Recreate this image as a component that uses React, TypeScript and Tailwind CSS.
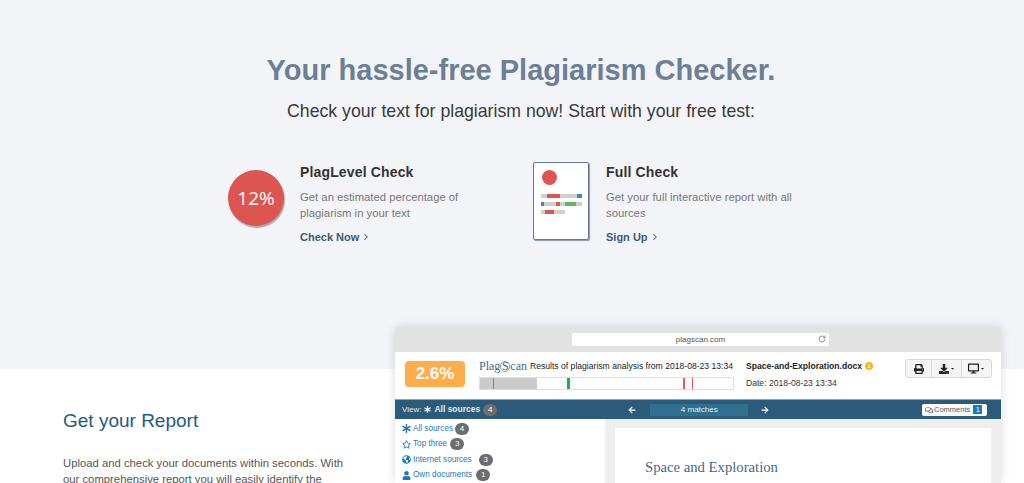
import React from 'react';
import { ChevronRight, RotateCw } from 'lucide-react';
import { FaPrint, FaDownload, FaDesktop, FaAsterisk, FaRegStar, FaGlobeAmericas, FaUser, FaArrowLeft, FaArrowRight, FaRegComments, FaCaretDown } from 'react-icons/fa';

const sources = [
  { label: 'All sources', count: 4, icon: <FaAsterisk className="w-[9px] h-[9px]" />, gap: 'ml-[2px]' },
  { label: 'Top three', count: 3, icon: <FaRegStar className="w-[9px] h-[9px]" />, gap: 'ml-[3px]' },
  { label: 'Internet sources', count: 3, icon: <FaGlobeAmericas className="w-[9px] h-[9px]" />, gap: 'ml-[7px]' },
  { label: 'Own documents', count: 1, icon: <FaUser className="w-[9px] h-[9px]" />, gap: 'ml-[4px]' },
];

const Count: React.FC<{ n: number; className?: string }> = ({ n, className = '' }) => (
  <span className={`flex items-center justify-center w-[14px] h-[12px] rounded-full bg-[#6d6d6d] text-white text-[8px] leading-none shrink-0 ${className}`}>{n}</span>
);

const DocIcon = () => (
  <div className="flex flex-col w-[56px] h-[78px] bg-white border border-[#67788a] rounded-[2px] shadow-[1px_1px_1px_#8a97a5] px-[7px] pt-[7px] shrink-0">
    <div className="w-[15px] h-[15px] rounded-full bg-[#dd5550] ml-[1px]" />
    <div className="flex h-[4px] w-[41px] mt-[9px] bg-[#cfcfcf]">
      <span className="w-[13px] h-full ml-[6px] bg-[#dd5550]" />
      <span className="w-[5px] h-full ml-auto bg-[#3b86c6]" />
    </div>
    <div className="flex h-[4px] w-[41px] mt-[4px] bg-[#cfcfcf]">
      <span className="w-[3px] h-full bg-[#3b86c6]" />
      <span className="w-[4px] h-full ml-[12px] bg-[#dd5550]" />
      <span className="w-[11px] h-full ml-[5px] bg-[#5cb85c]" />
    </div>
    <div className="flex h-[4px] w-[24px] mt-[4px] bg-[#cfcfcf]">
      <span className="w-[9px] h-full ml-[4px] bg-[#dd5550]" />
    </div>
  </div>
);

const Feature: React.FC<{ title: string; lines: string[]; link: string; className?: string }> = ({ title, lines, link, className = '' }) => (
  <div className={`flex flex-col ${className}`}>
    <h3 className="text-[14px] leading-[20px] font-bold text-[#333] tracking-[0.15px]">{title}</h3>
    <p className="mt-[7px] text-[11.3px] leading-[16px] text-[#777]">{lines[0]}<br />{lines[1]}</p>
    <a className="flex items-center mt-[8px] text-[11px] leading-[16px] font-bold text-[#3c5a78]">
      {link}<ChevronRight className="w-[10px] h-[10px] ml-[2px]" strokeWidth={2.5} />
    </a>
  </div>
);

const Report = () => (
  <div className="flex flex-col w-[606px] h-[156px] shadow-[0_0_10px_rgba(0,0,0,0.14)] bg-white">
    {/* fake browser bar */}
    <div className="flex items-center justify-center h-[25px] bg-[#e2e2e2] shrink-0">
      <div className="relative flex items-center justify-center w-[257px] h-[13px] ml-[5px] bg-white rounded-[2px] text-[8px] text-[#555]">
        plagscan.com
        <RotateCw className="absolute right-[3px] top-[2px] w-[8px] h-[8px] text-[#666]" />
      </div>
    </div>

    {/* report head */}
    <div className="flex h-[47px] shrink-0 bg-white">
      <div className="flex items-center justify-center w-[60px] h-[26px] mt-[9px] ml-[10px] rounded-[4px] bg-[#ffad4a] text-white text-[17px] font-bold">2.6%</div>
      <div className="flex flex-col ml-[14px] w-[255px] shrink-0">
        <div className="flex items-center h-[14px] mt-[7px]">
          <span className="text-[12px] leading-none text-[#3d6a8c] w-[46px] whitespace-nowrap" style={{ fontFamily: '"Liberation Serif", serif' }}>
            Plag<span className="inline-block rounded-full border border-[#7d9ab0] leading-[9px] w-[10px] text-center">S</span>can
          </span>
          <span className="ml-[5px] text-[8.6px] text-[#222] whitespace-nowrap">Results of plagiarism analysis from 2018-08-23 13:34</span>
        </div>
        <div className="flex h-[13px] mt-[4px] border border-[#dedede] bg-white">
          <div className="relative w-[57px] h-full bg-[#cbcbcb]"><span className="absolute left-[13px] w-px h-full bg-[#ee5555]" /></div>
          <span className="ml-[30px] w-[3px] h-full bg-[#12b84a]" />
          <span className="ml-[113px] w-[2px] h-full bg-[#ee5555]" />
          <span className="ml-[7px] w-px h-full bg-[#ee5555]" />
        </div>
      </div>
      <div className="flex flex-col ml-[12px] w-[159px] shrink-0">
        <div className="flex items-center h-[14px] mt-[7px] text-[8.6px] font-bold text-[#222]">
          Space-and-Exploration.docx
          <span className="flex items-center justify-center ml-[3px] w-[8px] h-[8px] rounded-full bg-[#f5b818] text-white text-[6px]">1</span>
        </div>
        <div className="mt-[4px] text-[8.6px] text-[#333]">Date: 2018-08-23 13:34</div>
      </div>
      <div className="flex h-[19px] mt-[7px] rounded-[3px] border border-[#d8d8d8] bg-[#f4f4f4] text-[#222]">
        <div className="flex items-center justify-center w-[26px] border-r border-[#d8d8d8]"><FaPrint className="w-[10px] h-[10px]" /></div>
        <div className="flex items-center justify-center w-[30px] border-r border-[#d8d8d8]"><FaDownload className="w-[10px] h-[10px]" /><FaCaretDown className="w-[5px] h-[5px] ml-[1px]" /></div>
        <div className="flex items-center justify-center w-[29px]"><FaDesktop className="w-[11px] h-[11px]" /><FaCaretDown className="w-[5px] h-[5px] ml-[1px]" /></div>
      </div>
    </div>

    {/* nav bar */}
    <div className="flex items-center h-[20px] shrink-0 bg-[#2b5b7b] border-t border-[#8aa3b5] text-[#e4ecf1] text-[8px]">
      <span className="ml-[7px]">View:</span>
      <FaAsterisk className="w-[7px] h-[7px] ml-[3px] text-white" />
      <span className="ml-[3px] font-bold text-[8.5px]">All sources</span>
      <Count n={4} className="ml-[3px]" />
      <FaArrowLeft className="w-[8px] h-[8px] ml-[131px] text-white" />
      <div className="flex items-center justify-center w-[98px] h-[12px] ml-[14px] bg-[#31708f] text-[8px]">4 matches</div>
      <FaArrowRight className="w-[8px] h-[8px] ml-[13px] text-white" />
      <div className="flex items-center h-[12px] w-[65px] ml-auto mr-[14px] pl-[3px] rounded-[2px] bg-white text-[#555] text-[7.5px]">
        <FaRegComments className="w-[8px] h-[8px] mr-[1px]" />Comments
        <span className="flex items-center justify-center w-[9px] h-[9px] ml-[3px] bg-[#0d7ec4] text-white">1</span>
      </div>
    </div>

    {/* body */}
    <div className="flex flex-1 min-h-0">
      <ul className="flex flex-col w-[210px] shrink-0 bg-white pt-[2px] pl-[7px] text-[8.2px] text-[#1f78b4]">
        {sources.map(s => (
          <li key={s.label} className="flex items-center h-[16px]">
            {s.icon}<span className="ml-[2px]">{s.label}</span><Count n={s.count} className={s.gap} />
          </li>
        ))}
      </ul>
      <div className="flex-1 bg-[#eeeeee] pl-[10px] pr-[10px] pt-[9px]">
        <div className="h-full bg-white pl-[30px] pt-[31px] text-[14.7px] leading-[16px] text-[#3d6a8c]" style={{ fontFamily: '"Liberation Serif", serif' }}>Space and Exploration</div>
      </div>
    </div>
  </div>
);

export default function App() {
  return (
    <div className="flex flex-col w-[1024px] h-[483px] overflow-hidden bg-white" style={{ fontFamily: '"Liberation Sans", Arial, sans-serif' }}>
      <section className="flex flex-col items-center h-[369px] shrink-0 bg-[#f3f4f7] pl-[18px] pt-[52px]">
        <h1 className="text-[29px] leading-[36px] font-bold text-[#6b7f97]">Your hassle-free Plagiarism Checker.</h1>
        <p className="mt-[11px] text-[17.7px] leading-[24px] text-[#3a3a3a]">Check your text for plagiarism now! Start with your free test:</p>
        <div className="flex self-start ml-[210px] mt-[39px]">
          <div className="flex items-start w-[305px]">
            <div className="flex items-center justify-center w-[56px] h-[56px] mt-[8px] rounded-full bg-[#dd5550] shadow-[1px_2px_1px_#a9a9a9] text-white text-[19px] font-medium shrink-0" style={{ fontFamily: '"Open Sans", sans-serif' }}>12%</div>
            <Feature className="ml-[16px]" title="PlagLevel Check" lines={['Get an estimated percentage of', 'plagiarism in your text']} link="Check Now" />
          </div>
          <div className="flex items-start">
            <DocIcon />
            <Feature className="ml-[17px]" title="Full Check" lines={['Get your full interactive report with all', 'sources']} link="Sign Up" />
          </div>
        </div>
      </section>

      <section className="flex flex-1 min-h-0">
        <div className="w-[395px] shrink-0 pl-[63px] pt-[40px]">
          <h2 className="text-[19px] leading-[24px] text-[#1f5a85]">Get your Report</h2>
          <p className="mt-[22px] w-[290px] text-[11.3px] leading-[16px] text-[#555]">Upload and check your documents within seconds. With our comprehensive report you will easily identify the</p>
        </div>
        <div className="-mt-[42px]"><Report /></div>
      </section>
    </div>
  );
}
